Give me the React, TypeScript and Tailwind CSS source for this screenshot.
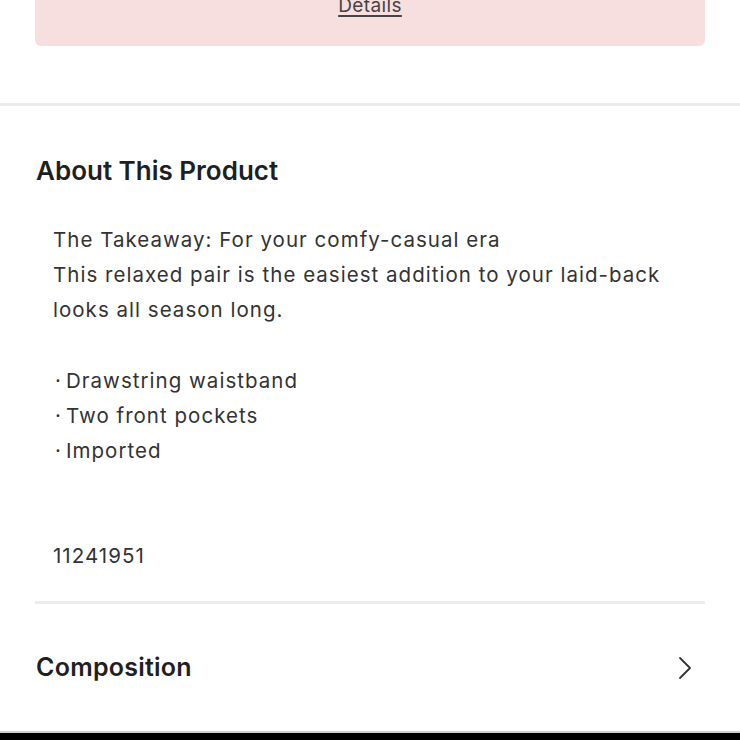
const bullets = ['Drawstring waistband', 'Two front pockets', 'Imported'];

export default function App() {
  return (
    <div className="w-[740px] h-[740px] overflow-hidden bg-white font-['Inter',sans-serif] text-[#222] flex flex-col">
      <div className="px-[35px] -mt-[30px]">
        <div className="h-[76px] bg-[#f7dfe0] rounded-md flex justify-center pt-[24px]">
          <span className="text-[19px] leading-[24px] tracking-[0.02em] text-[#444] underline underline-offset-[3px] decoration-[1.5px]">Details</span>
        </div>
      </div>

      <div className="mt-[57px] border-t-[3px] border-[#ececec]" />

      <section className="px-[36px] pt-[49px]">
        <h2 className="text-[26px] leading-[32px] font-semibold text-[#1f1f1f]">About This Product</h2>
        <div className="pl-[17px] pt-[35px] text-[20.5px] leading-[35px] tracking-[0.05em] text-[#333]">
          <p>The Takeaway: For your comfy-casual era</p>
          <p>This relaxed pair is the easiest addition to your laid-back looks all season long.</p>
          <p className="h-[35px]" />
          <ul className="pt-[1px]">
            {bullets.map((b) => (
              <li key={b} className="flex">
                <span className="w-[13px] pl-[2px] tracking-normal">·</span>
                <span>{b}</span>
              </li>
            ))}
          </ul>
          <p className="mt-[70px]">11241951</p>
        </div>
      </section>

      <div className="mx-[35px] mt-[28px] border-t-[3px] border-[#ececec]" />

      <div className="px-[36px] h-[135px] flex items-center justify-between">
        <h3 className="text-[25px] font-semibold tracking-[0.01em] text-[#1f1f1f]">Composition</h3>
        <svg width="14" height="24" viewBox="0 0 14 24" className="mr-[12px]" fill="none" stroke="#333" strokeWidth="1.8" strokeLinecap="round" strokeLinejoin="round">
          <path d="M2 2l10 10-10 10" />
        </svg>
      </div>

      <div className="mt-auto border-t-[2px] border-[#cfcfcf] h-[9px] bg-black" />
    </div>
  );
}
